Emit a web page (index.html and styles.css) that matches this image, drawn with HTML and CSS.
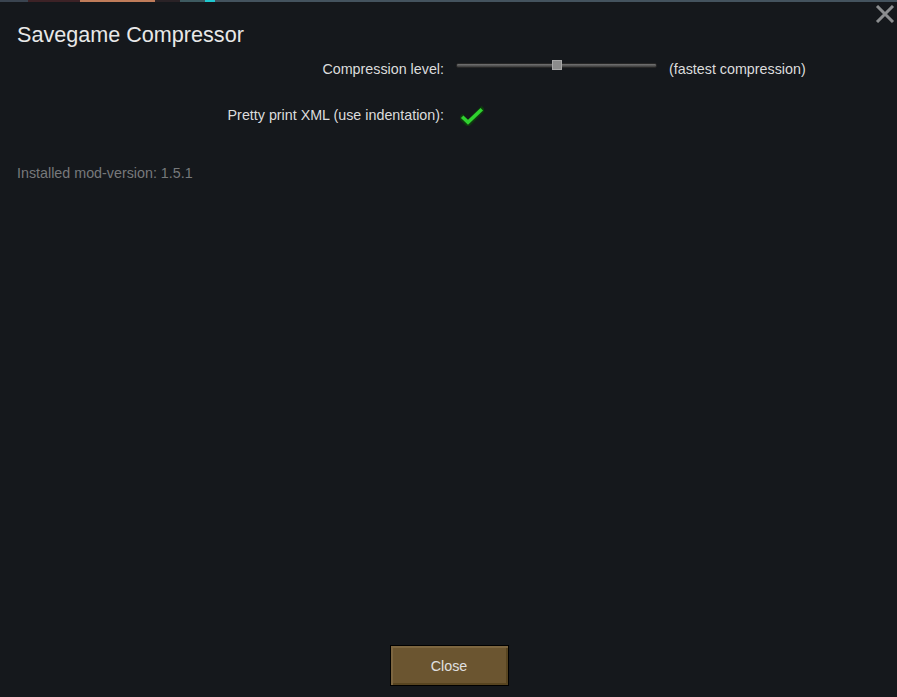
FILE: index.html
```html
<!DOCTYPE html>
<html>
<head>
<meta charset="utf-8">
<link rel="stylesheet" href="styles.css">
</head>
<body>
<div class="topstrip">
  <span class="seg s1"></span><span class="seg s2"></span><span class="seg s3"></span><span class="seg s4"></span><span class="seg s5"></span><span class="seg s6"></span>
</div>
<div class="window">
  <button class="close-x" aria-label="close">
    <svg width="20" height="18" viewBox="0 0 20 18"><path d="M2 1 L18 17 M18 1 L2 17" stroke="#8b8d8f" stroke-width="3" fill="none"/></svg>
  </button>
  <h1 class="title">Savegame Compressor</h1>
  <div class="settings">
    <div class="row row-slider">
      <div class="label">Compression level:</div>
      <div class="control">
        <div class="slider"><div class="track"></div><div class="thumb"></div></div>
        <span class="value">(fastest compression)</span>
      </div>
    </div>
    <div class="row row-check">
      <div class="label">Pretty print XML (use indentation):</div>
      <div class="control">
        <svg class="check" width="24" height="20" viewBox="0 0 24 20"><path d="M2.5 12 L8 17.5 L21.5 4" stroke="#0f3a0f" stroke-width="6" fill="none" stroke-linecap="square"/><path d="M3.5 12 L8 16.2 L20.5 4.5" stroke="#2fd12f" stroke-width="3.6" fill="none" stroke-linecap="square"/></svg>
      </div>
    </div>
  </div>
  <div class="version">Installed mod-version: 1.5.1</div>
  <div class="spacer"></div>
  <div class="footer">
    <button class="btn-close">Close</button>
  </div>
</div>
</body>
</html>
```
FILE: styles.css
```css
html, body {
  margin: 0;
  padding: 0;
  background: #15181c;
  height: 100%;
  overflow: hidden;
}
body {
  font-family: "Liberation Sans", Arial, sans-serif;
  color: #dcdcdc;
}
.topstrip {
  display: flex;
  height: 2px;
  background: #44535e;
}
.seg { display: block; height: 2px; }
.s1 { width: 28px; background: #3a4450; }
.s2 { width: 52px; background: #3d2226; }
.s3 { width: 75px; background: #c07c5a; }
.s4 { width: 25px; background: #2a2226; }
.s5 { width: 25px; background: #3e5a60; }
.s6 { width: 10px; background: #20c8d0; }
.window {
  position: relative;
  height: 695px;
  display: flex;
  flex-direction: column;
  padding: 0 17px;
  box-sizing: border-box;
}
.close-x {
  position: absolute;
  top: 3px;
  right: 2px;
  background: none;
  border: 0;
  padding: 0;
  width: 20px;
  height: 18px;
  display: flex;
}
.title {
  margin: 21px 0 0;
  font-size: 21.6px;
  font-weight: normal;
  color: #e8e8e8;
  line-height: 24px;
}
.settings {
  display: flex;
  flex-direction: column;
  margin-top: 11px;
}
.row {
  display: flex;
  align-items: center;
  font-size: 14.3px;
}
.row-slider { height: 22px; }
.row-check { height: 22px; margin-top: 24px; }
.label {
  width: 427px;
  text-align: right;
  flex: none;
}
.control {
  display: flex;
  align-items: center;
  margin-left: 13px;
}
.slider {
  position: relative;
  width: 201px;
  height: 11px;
  margin-bottom: 7px;
  margin-left: -1px;
}
.track {
  position: absolute;
  left: 0; right: 0;
  top: 3px;
  height: 5px;
  border-radius: 2px;
  background: linear-gradient(#757575, #3a3a3a);
  border: 1px solid #262626;
  box-sizing: border-box;
}
.thumb {
  position: absolute;
  left: 96px;
  top: 0;
  width: 10px;
  height: 10px;
  background: #8c8c8c;
  border: 1px solid #a8a8a8;
  box-sizing: border-box;
}
.value {
  margin-left: 12px;
}
.check {
  margin-left: 3px;
  margin-top: 2px;
}
.version {
  margin-top: 39px;
  font-size: 14.3px;
  color: #77797b;
}
.spacer { flex: 1; }
.footer {
  display: flex;
  justify-content: center;
  padding-bottom: 11px;
}
.btn-close {
  width: 119px;
  height: 41px;
  margin-left: 1px;
  border: 1px solid #000;
  background: #6b5530;
  box-shadow: inset 2px 2px 0 #7d6640, inset -2px -2px 0 #574420;
  color: #e0e0e0;
  font-family: "Liberation Sans", Arial, sans-serif;
  font-size: 14.3px;
  padding: 0;
}
```
